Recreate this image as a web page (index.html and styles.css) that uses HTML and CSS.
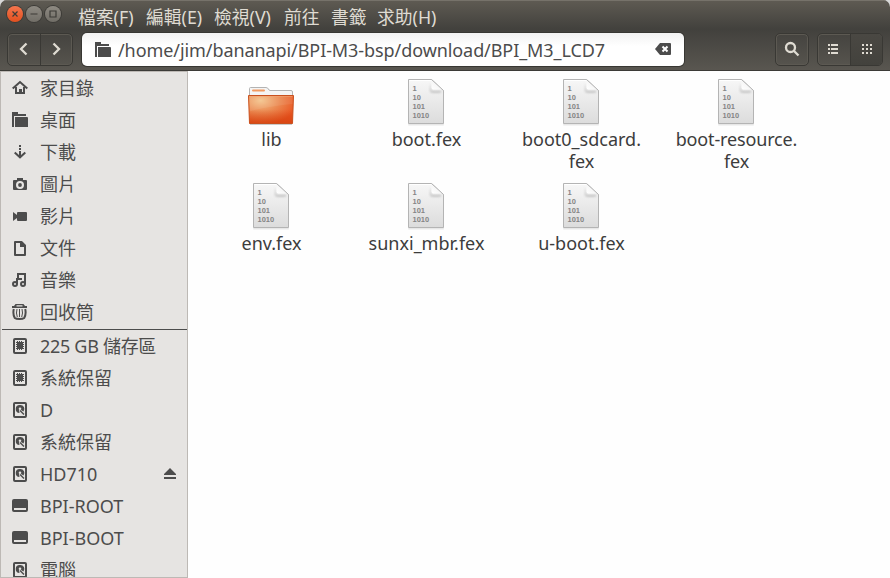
FILE: index.html
```html
<!DOCTYPE html>
<html lang="zh-Hant">
<head>
<meta charset="utf-8">
<title>BPI_M3_LCD7</title>
<link rel="stylesheet" href="styles.css">
</head>
<body>
<svg class="defs" width="0" height="0" aria-hidden="true">
  <defs>
    <linearGradient id="paper" x1="0" y1="0" x2="0" y2="1"><stop offset="0" stop-color="#f7f7f7"/><stop offset="1" stop-color="#dcdcdc"/></linearGradient>
    <linearGradient id="curl" x1="0" y1="1" x2="1" y2="0"><stop offset="0" stop-color="#fff"/><stop offset=".6" stop-color="#f4f4f4"/><stop offset="1" stop-color="#ccc"/></linearGradient>
    <filter id="soft" x="-30%" y="-30%" width="160%" height="160%"><feGaussianBlur stdDeviation="1"/></filter>
    <radialGradient id="orange" cx=".27" cy=".18" r=".85"><stop offset="0" stop-color="#f3c48c"/><stop offset=".5" stop-color="#eb8850"/><stop offset="1" stop-color="#e9531f"/></radialGradient>
    <linearGradient id="shade" x1="0" y1="0" x2="0" y2="1"><stop offset=".5" stop-color="#c93a08" stop-opacity="0"/><stop offset="1" stop-color="#c93a08" stop-opacity=".5"/></linearGradient>
  </defs>
  <symbol id="i-folder" viewBox="0 0 16 16"><path d="M0 0H6V2H14V4H2V15H0Z"/><path d="M3 5H15Q16 5 16 6V15H3Z"/></symbol>
  <symbol id="i-home" viewBox="0 0 16 16"><path d="M.7 8.500L8 2L15.300 8.500" fill="none" stroke="currentColor" stroke-width="2"/><path d="M4 7V13H12V7" fill="none" stroke="currentColor" stroke-width="2"/><path d="M7 9H10V13H7Z"/></symbol>
  <symbol id="i-down" viewBox="0 0 16 16"><path d="M7 1H9V3H7ZM7 4H9V6H7ZM7 7H9V13H7Z"/><path d="M2.700 8.500L8 13.300L13.300 8.500" fill="none" stroke="currentColor" stroke-width="2"/></symbol>
  <symbol id="i-camera" viewBox="0 0 16 16"><path fill-rule="evenodd" d="M5 2H11V4H14Q15 4 15 5V13Q15 14 14 14H2Q1 14 1 13V5Q1 4 2 4H5ZM8 5A4 4 0 1 0 8 13A4 4 0 1 0 8 5Z"/><circle cx="8" cy="9" r="1.900"/></symbol>
  <symbol id="i-video" viewBox="0 0 16 16"><path d="M1 4L5 7V10L1 13Z"/><rect x="5" y="4" width="10" height="9" rx="1"/></symbol>
  <symbol id="i-doc" viewBox="0 0 16 16"><path d="M3 2H9.500L13 5.500V15H3Z" fill="none" stroke="currentColor" stroke-width="2" stroke-linejoin="round"/><path d="M8 2H10L13 5V7H8Z"/></symbol>
  <symbol id="i-music" viewBox="0 0 16 16"><g fill="none" stroke="currentColor" stroke-width="2"><circle cx="3" cy="12" r="2"/><circle cx="11" cy="12" r="2"/><path d="M5 12V7H10M13 12V2H6V7"/></g></symbol>
  <symbol id="i-trash" viewBox="0 0 16 16"><path fill-rule="evenodd" d="M3.500 0H11.500L13 2H15V4H0V2H2ZM4.500 1.300V2.500H10.500V1.300Z"/><path d="M1.800 5Q.6 10 2.800 14Q4 15 7.500 15Q11 15 12.200 14Q14.400 10 13.200 5" fill="none" stroke="currentColor" stroke-width="2"/><path d="M5 5Q3.800 9 5.300 13M7.500 5V13M10 5Q11.200 9 9.700 13" fill="none" stroke="currentColor" stroke-width="1"/></symbol>
  <symbol id="i-chip" viewBox="0 0 16 16"><rect x="2" y="1" width="12" height="14" rx="1" fill="none" stroke="currentColor" stroke-width="2"/><path d="M5 4H11V11H5Z"/><path d="M4 4.500H12M4 6.500H12M4 8.500H12M4 10.500H12M5.500 3V12M7.500 3V12M9.500 3V12" stroke="currentColor"/></symbol>
  <symbol id="i-disk" viewBox="0 0 16 16"><rect x="2" y="1" width="12" height="14" rx="1" fill="none" stroke="currentColor" stroke-width="2"/><path fill-rule="evenodd" d="M8 3A4 4 0 1 0 7.500 11L7 8L9 8L11.500 9.500A4 4 0 0 0 8 3ZM8 5.500A1.300 1.300 0 1 0 8 8.100A1.300 1.300 0 1 0 8 5.500Z"/><path d="M8 8.500L12 12.500" stroke="currentColor" stroke-width="1.500"/></symbol>
  <symbol id="i-drive" viewBox="0 0 16 16"><path fill-rule="evenodd" d="M2 1H14Q16 1 16 3V12Q16 14 14 14H2Q0 14 0 12V3Q0 1 2 1ZM2 10V12H14V10Z"/></symbol>
  <symbol id="i-eject" viewBox="0 0 14 12"><path d="M7 0L13 6V7H1V6ZM1 9H13V11H1Z"/></symbol>
  <symbol id="f-bin" viewBox="0 0 48 48">
    <path d="M6 2.500H30L41.500 14V47H6Z" fill="#000" opacity=".09" transform="translate(.3 .5)"/>
    <path d="M6.500 1.500H29.500L41.500 12.500V45.500H6.500Z" fill="url(#paper)" stroke="#b4b4b4"/>
    <path d="M7.500 2.500H29" stroke="#fff"/>
    <path d="M28.500 5L29 13H40L38 14.500H30Q28 14.500 28 12Z" fill="#888" opacity=".6" filter="url(#soft)"/>
    <path d="M29.500 2V9.500Q29.500 11.500 31.500 11.500H40.500L36 7Z" fill="url(#curl)"/>
    <path d="M29.500 1.500L41.500 12.500" stroke="#b5b5b5"/>
  </symbol>
  <symbol id="f-dir" viewBox="0 0 48 48">
    <path d="M2.500 18V10.500Q2.500 9.500 3.500 9.500H19Q21 9.500 22 12L23 12.500H44Q45.500 12.500 45.500 14V20H2.500Z" fill="#f4f4f4" stroke="#b3b3b3"/>
    <rect x="5" y="11.500" width="13" height="2" rx="1" fill="#f19a61"/>
    <path d="M3 46.500H45" stroke="#000" opacity=".2"/>
    <path d="M1.500 17.500H46.500L45.500 45.500H2.500Z" fill="url(#orange)"/>
    <path d="M1.500 17.500H46.500L45.500 45.500H2.500Z" fill="url(#shade)" stroke="#c9501e" stroke-linejoin="round"/>
    <path d="M2.500 18.500H45.500V26Q30 27 3 33Z" fill="#fff" opacity=".08"/>
    <path d="M2.500 18.500H45.500" stroke="#f0a878" opacity=".6"/>
  </symbol>
</svg>
<div class="window">
  <header class="titlebar">
    <div class="controls">
      <span class="ctl close"><svg viewBox="0 0 16 16"><path d="M5.500 5.500L10.500 10.500M10.500 5.500L5.500 10.500"/></svg></span>
      <span class="ctl"><svg viewBox="0 0 16 16"><path d="M4.500 8H11.500"/></svg></span>
      <span class="ctl"><svg viewBox="0 0 16 16"><path d="M5 5H11V11H5Z"/></svg></span>
    </div>
    <nav class="menu"><span>檔案(F)</span><span>編輯(E)</span><span>檢視(V)</span><span>前往</span><span>書籤</span><span>求助(H)</span></nav>
  </header>
  <div class="toolbar">
    <div class="group nav">
      <button class="btn"><svg width="32" height="32"><path d="M18.500 10.500L13 16L18.500 21.500" class="chev"/></svg></button>
      <button class="btn"><svg width="32" height="32"><path d="M12.500 10.500L18 16L12.500 21.500" class="chev"/></svg></button>
    </div>
    <div class="path">
      <svg class="icon" width="16" height="16"><use href="#i-folder"/></svg>
      <span class="path-text">/home/jim/bananapi/BPI-M3-bsp/download/BPI_M3_LCD7</span>
      <svg class="clear" width="16" height="12" viewBox="0 0 16 12"><path d="M0 6L5 0H15Q16 0 16 1V11Q16 12 15 12H5Z"/><path d="M7.500 3.500L12.500 8.500M12.500 3.500L7.500 8.500" stroke="#fff" stroke-width="2"/></svg>
    </div>
    <div class="group search"><button class="btn"><svg width="32" height="32"><circle cx="14.500" cy="14.500" r="4.500" class="lens"/><path d="M18 18L22.500 22.500" class="lens"/></svg></button></div>
    <div class="group views">
      <button class="btn"><svg width="32" height="32"><path class="glyph" d="M10 11H12V13H10ZM13 11H20V13H13ZM10 15H12V17H10ZM13 15H20V17H13ZM10 19H12V21H10ZM13 19H20V21H13Z"/></svg></button>
      <button class="btn on"><svg width="32" height="32"><path class="glyph" d="M11 11h2v2h-2zM15 11h2v2h-2zM19 11h2v2h-2zM11 15h2v2h-2zM15 15h2v2h-2zM19 15h2v2h-2zM11 19h2v2h-2zM15 19h2v2h-2zM19 19h2v2h-2z"/></svg></button>
    </div>
  </div>
  <div class="body">
    <aside class="sidebar">
      <ul class="places">
        <li><svg class="icon"><use href="#i-home"/></svg><span>家目錄</span></li>
        <li><svg class="icon"><use href="#i-folder"/></svg><span>桌面</span></li>
        <li><svg class="icon"><use href="#i-down"/></svg><span>下載</span></li>
        <li><svg class="icon"><use href="#i-camera"/></svg><span>圖片</span></li>
        <li><svg class="icon"><use href="#i-video"/></svg><span>影片</span></li>
        <li><svg class="icon"><use href="#i-doc"/></svg><span>文件</span></li>
        <li><svg class="icon"><use href="#i-music"/></svg><span>音樂</span></li>
        <li><svg class="icon"><use href="#i-trash"/></svg><span>回收筒</span></li>
      </ul>
      <ul class="places devices">
        <li><svg class="icon"><use href="#i-chip"/></svg><span class="size">225 GB 儲存區</span></li>
        <li><svg class="icon"><use href="#i-chip"/></svg><span>系統保留</span></li>
        <li><svg class="icon"><use href="#i-disk"/></svg><span>D</span></li>
        <li><svg class="icon"><use href="#i-disk"/></svg><span>系統保留</span></li>
        <li><svg class="icon"><use href="#i-disk"/></svg><span>HD710</span><svg class="eject"><use href="#i-eject"/></svg></li>
        <li><svg class="icon"><use href="#i-drive"/></svg><span>BPI-ROOT</span></li>
        <li><svg class="icon"><use href="#i-drive"/></svg><span>BPI-BOOT</span></li>
        <li><svg class="icon"><use href="#i-disk"/></svg><span>電腦</span></li>
      </ul>
    </aside>
    <main class="files">
      <figure><svg><use href="#f-dir"/></svg><figcaption>lib</figcaption></figure>
      <figure><svg><use href="#f-bin"/><text x="10.500" y="12.500">1</text><text x="10.500" y="21.500">10</text><text x="10.500" y="30.500">101</text><text x="10.500" y="39.500">1010</text></svg><figcaption>boot.fex</figcaption></figure>
      <figure><svg><use href="#f-bin"/><text x="10.500" y="12.500">1</text><text x="10.500" y="21.500">10</text><text x="10.500" y="30.500">101</text><text x="10.500" y="39.500">1010</text></svg><figcaption>boot0_sdcard.<br>fex</figcaption></figure>
      <figure><svg><use href="#f-bin"/><text x="10.500" y="12.500">1</text><text x="10.500" y="21.500">10</text><text x="10.500" y="30.500">101</text><text x="10.500" y="39.500">1010</text></svg><figcaption class="tight">boot-resource.<br>fex</figcaption></figure>
      <figure><svg><use href="#f-bin"/><text x="10.500" y="12.500">1</text><text x="10.500" y="21.500">10</text><text x="10.500" y="30.500">101</text><text x="10.500" y="39.500">1010</text></svg><figcaption>env.fex</figcaption></figure>
      <figure><svg><use href="#f-bin"/><text x="10.500" y="12.500">1</text><text x="10.500" y="21.500">10</text><text x="10.500" y="30.500">101</text><text x="10.500" y="39.500">1010</text></svg><figcaption>sunxi_mbr.fex</figcaption></figure>
      <figure><svg><use href="#f-bin"/><text x="10.500" y="12.500">1</text><text x="10.500" y="21.500">10</text><text x="10.500" y="30.500">101</text><text x="10.500" y="39.500">1010</text></svg><figcaption>u-boot.fex</figcaption></figure>
    </main>
  </div>
</div>
</body>
</html>
```
FILE: styles.css
```css
* { box-sizing: border-box; }
body {
  margin: 0;
  background: #d8d8d8;
  color: #4c4c4c;
  font: 18px/22px "Noto Sans", "Noto Sans CJK TC", sans-serif;
  overflow: hidden;
}
.defs { display: block; height: 0; }
.window {
  display: flex;
  flex-direction: column;
  width: 890px;
  height: 578px;
  overflow: hidden;
  border-radius: 7px 7px 0 0;
  background: #fefefe;
}
.titlebar {
  display: flex;
  height: 29px;
  flex: none;
  padding-left: 7px;
  background: linear-gradient(#5f5b53, #42413d);
  box-shadow: inset 0 1px #76726a;
}
.controls { display: flex; gap: 3px; padding-top: 6px; width: 71px; }
.ctl {
  width: 16px;
  height: 16px;
  border-radius: 50%;
  background: linear-gradient(#8e8a82, #716e67);
  box-shadow: 0 0 0 1px #3c3b37;
}
.ctl.close { background: linear-gradient(#f4754d, #e2501f); }
.ctl svg { display: block; width: 16px; height: 16px; fill: none; stroke: #3c3b37; stroke-width: 1.2; }
.menu { display: flex; padding-top: 6px; color: #dfdbd2; font-size: 17.8px; white-space: nowrap; }
.menu span { width: 68px; }
.menu span:nth-child(2) { width: 68px; }
.menu span:nth-child(3) { width: 70px; }
.menu span:nth-child(4) { width: 47px; }
.menu span:nth-child(5) { width: 46px; }
.toolbar {
  display: flex;
  height: 42px;
  flex: none;
  padding: 4px 7px 0;
  background: linear-gradient(#42413d, #595650);
  border-bottom: 1px solid #3c3b37;
}
.group {
  display: flex;
  width: 66px;
  height: 33px;
  border: 1px solid #393834;
  border-radius: 5px;
  box-shadow: inset 0 0 0 1px #5c5952;
  overflow: hidden;
}
.btn {
  display: block;
  width: 32px;
  height: 31px;
  padding: 0;
  border: 0;
  background: none;
}
.btn + .btn { border-left: 1px solid #393834; }
.btn svg { display: block; margin-top: -1px; }
.btn.on { background: linear-gradient(#4a4843, #43423d); }
.chev, .lens { fill: none; stroke: #dfdbd2; stroke-width: 2.3; }
.glyph { fill: #dfdbd2; }
.path {
  display: flex;
  align-items: center;
  width: 602px;
  height: 33px;
  margin-left: 9px;
  padding: 0 13px 0 13px;
  border-radius: 5px;
  background: linear-gradient(#f2f2f2, #fff 40%);
  box-shadow: 0 0 0 1px #383733;
}
.path-text { flex: 1; margin-left: 7px; white-space: nowrap; letter-spacing: -.08px; }
.clear { fill: #4c4c4c; margin-bottom: 1px; }
.search { width: 34px; margin-left: 91px; }
.views { margin-left: 8px; }
.body { display: flex; flex: 1; min-height: 0; }
.sidebar {
  width: 188px;
  height: 507px;
  overflow: hidden;
  border: 1px solid #bdb9b5;
  background: #e6e4e2;
}
.places { margin: 0; padding: 0; list-style: none; }
.places li { display: flex; align-items: center; height: 32px; padding-left: 11px; white-space: nowrap; }
.places span { margin-left: 12px; }
.places .size { letter-spacing: -.3px; }
.devices { margin: 1px 0 0 1px; border-top: 1px solid #4c4c4c; }
.devices li { padding-left: 10px; }
.icon { flex: none; width: 16px; height: 16px; fill: currentColor; }
.eject { width: 14px; height: 12px; margin: 0 10px 0 auto; fill: currentColor; }
.files {
  display: grid;
  grid-template-columns: repeat(4, 155px);
  grid-auto-rows: 104px;
  align-content: start;
  padding: 7px 0 0 6px;
}
.files figure { margin: 0; text-align: center; color: #3c3c3c; }
.files svg { display: block; width: 48px; height: 48px; margin: 0 auto 2px 53px; }
.files text { font: bold 7.5px "Liberation Sans", sans-serif; fill: #858585; }
.files .tight { letter-spacing: -.15px; }
```
